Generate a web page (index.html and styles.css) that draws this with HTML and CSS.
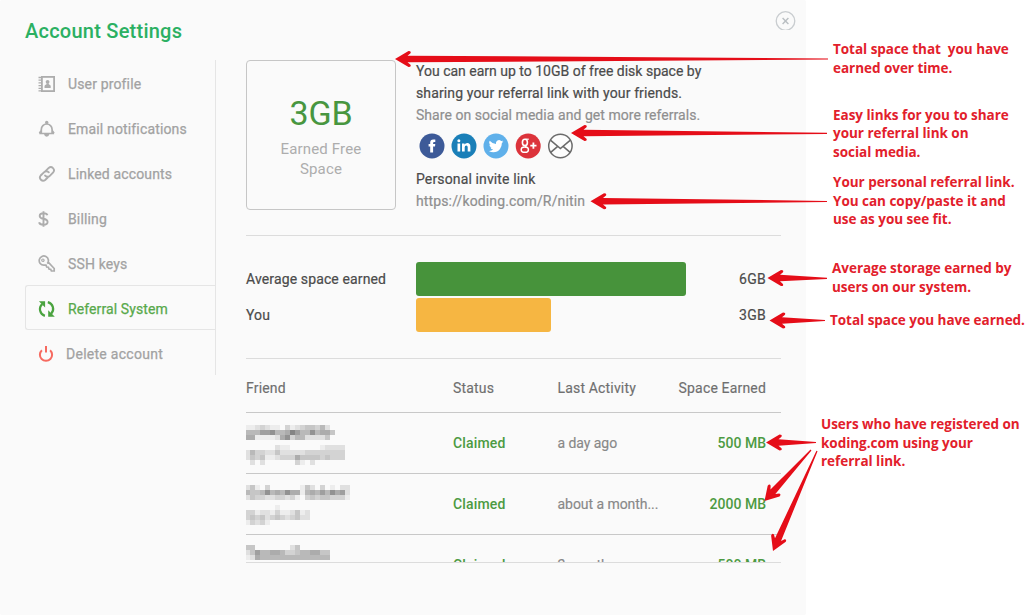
FILE: index.html
```
<!DOCTYPE html>
<html lang="en">
<head>
<meta charset="utf-8">
<title>Account Settings</title>
<link rel="stylesheet" href="styles.css">
</head>
<body>
<div class="page">
  <section class="modal">
    <header class="modal-head">
      <h1>Account Settings</h1>
      <svg class="close" width="21" height="19" viewBox="0 0 21 19"><circle cx="10.5" cy="10" r="9.3" fill="none" stroke="#c9cdd0" stroke-width="1.3"/><path d="M7.6 7.1l5.8 5.8M13.4 7.1l-5.8 5.8" stroke="#b9bec2" stroke-width="1.4"/></svg>
    </header>
    <div class="modal-body">
      <nav class="side">
        <a><svg width="18" height="18" viewBox="0 0 18 18"><rect x="3.9" y="1.9" width="12.2" height="14.2" fill="none" stroke="#adadad" stroke-width="1.8"/><path d="M0.5 2.5h3M0.5 5.2h3M0.5 7.9h3M0.5 10.6h3M0.5 13.3h3M0.5 15.9h3" stroke="#adadad" stroke-width="1.3"/><circle cx="9.6" cy="6.8" r="1.9" fill="#adadad"/><path d="M6.5 13v-2q.3-1.3 1.8-1.4l.4-1.4h1.900l.4 1.400q1.500.1 1.700 1.400v2z" fill="#adadad"/></svg><span>User profile</span></a>
        <a><svg width="18" height="18" viewBox="0 0 18 18"><path d="M1.300 13.500h14.800M3.300 13v-3.600a5.400 5.400 0 0 1 10.800 0V13M3.300 10.500L1.400 13.300M14.100 10.500l1.900 2.800" fill="none" stroke="#adadad" stroke-width="1.700"/><circle cx="8.700" cy="2.500" r="1.700" fill="#adadad"/><path d="M6 14h5.400q-.6 2.800-2.700 2.800T6 14z" fill="#adadad"/></svg><span>Email notifications</span></a>
        <a><svg width="18" height="18" viewBox="0 0 18 18"><g fill="none" stroke="#adadad" stroke-width="1.900" stroke-linecap="round"><path d="M8 5.600l2.700-2.700a3.200 3.200 0 0 1 4.500 4.500l-3.400 3.400a3.200 3.200 0 0 1-4.700-.2"/><path d="M9.700 12.500L7.200 15a3.200 3.200 0 0 1-4.500-4.500l3.500-3.400a3.200 3.200 0 0 1 4.600.2"/></g></svg><span>Linked accounts</span></a>
        <a><svg width="18" height="18" viewBox="0 0 18 18"><path d="M9.400 5.200Q8.800 3.300 5.600 3.300 1.700 3.400 1.700 6q0 2.100 3.600 2.800 4.300.8 4.300 3.200 0 2.700-4.200 2.700-3.800 0-4.300-2.500M5.500 1.200v15.500" fill="none" stroke="#adadad" stroke-width="1.900"/></svg><span>Billing</span></a>
        <a><svg width="18" height="18" viewBox="0 0 18 18"><path d="M9.300 8.600A4.600 4.600 0 1 0 5.800 10.200L8 10.200 8.700 12 10.400 12.200 11 14 12.700 14.300 13.400 16H16.200V13.500L10.200 7.200" fill="none" stroke="#adadad" stroke-width="1.700"/><circle cx="4.900" cy="5.200" r="1.200" fill="none" stroke="#adadad" stroke-width="1.200"/></svg><span>SSH keys</span></a>
        <a class="active"><svg width="18" height="18" viewBox="0 0 18 18"><path d="M6.900 15.900A7 7 0 0 1 4.200 4.100M9.800 2.100A7 7 0 0 1 13.200 13.700" fill="none" stroke="#4aa33f" stroke-width="2.200"/><path d="M.9 1.300h6.200v6.200zM16.800 16.700h-6.600V10.300z" fill="#4aa33f"/></svg><span>Referral System</span></a>
        <a class="delete"><svg width="18" height="18" viewBox="0 0 18 18"><path d="M3.900 5.200a6.100 6.100 0 1 0 8.200 0M8 1v6.500" fill="none" stroke="#f66a60" stroke-width="2"/></svg><span>Delete account</span></a>
      </nav>
      <main class="main">
        <div class="top">
          <div class="earned"><strong>3GB</strong><span>Earned Free<br>Space</span></div>
          <div class="share">
            <p class="l1">You can earn up to 10GB of free disk space by</p>
            <p>sharing your referral link with your friends.</p>
            <p class="muted l3">Share on social media and get more referrals.</p>
            <div class="social">
              <svg viewBox="0 0 26 26"><circle cx="13" cy="13" r="12.500" fill="#3d5a98"/><path d="M11.200 19.400v-5.800H9.600v-2.500h1.600V9.500q0-3.100 3.100-3.100h2V9h-1.200q-1 0-1 .9v1.200h2.200l-.3 2.500h-1.900v5.800z" fill="#fff"/></svg>
              <svg viewBox="0 0 26 26"><circle cx="13" cy="13" r="12.500" fill="#1a7fb8"/><path d="M6.500 10.400h2.700v8H6.500zM11 10.400h2.500v1.200q.9-1.500 2.800-1.500 3.100 0 3.100 3.600v4.700h-2.700v-4.200q0-1.800-1.400-1.800-1.600 0-1.600 1.900v4.100H11z" fill="#fff"/><circle cx="7.850" cy="7.800" r="1.500" fill="#fff"/></svg>
              <svg viewBox="0 0 26 26"><circle cx="13" cy="13" r="12.500" fill="#5fb0ea"/><path d="M20.400 8.600q-.8.400-1.700.5.900-.6 1.300-1.700-.9.500-1.900.7A3 3 0 0 0 13 10.900Q9.300 10.700 6.700 7.700q-1.400 2.500.9 4.100-.7 0-1.300-.4.100 2.400 2.400 3-.7.200-1.300.1.600 1.900 2.800 2.100-1.900 1.500-4.400 1.300 2.200 1.300 4.600 1.300 4.200 0 6.600-3.200 1.900-2.600 1.900-5.900.9-.6 1.500-1.500z" fill="#fff"/></svg>
              <svg viewBox="0 0 26 26"><circle cx="13.200" cy="13" r="12.500" fill="#dc333b"/><g fill="none" stroke="#fff"><ellipse cx="9.900" cy="9.400" rx="2.500" ry="3.100" stroke-width="1.600"/><path d="M10.500 6.200h3.300" stroke-width="1.200"/><path d="M11 12.300q-1.200 1 .4 2" stroke-width="1.500"/><ellipse cx="9.800" cy="16.700" rx="3.600" ry="2.600" stroke-width="1.500"/><path d="M15.300 12.700h6.200M18.400 9.600v6.200" stroke-width="1.800"/></g></svg>
              <svg viewBox="0 0 26 26"><circle cx="13.400" cy="13" r="11.700" fill="#fdfdfd" stroke="#6b6b6b" stroke-width="1.500"/><path d="M3.700 7.300l9.700 8.200 9.700-8.200M3.700 19.300l7-6M23.100 19.300l-7-6" fill="none" stroke="#6b6b6b" stroke-width="1.600"/></svg>
            </div>
            <p>Personal invite link</p>
            <p class="muted">https://koding.com/R/nitin</p>
          </div>
        </div>
        <div class="bars">
          <div class="bar-row"><span class="bar-label">Average space earned</span><span class="track"><i class="bar green" style="width:270px"></i></span><span class="amount">6GB</span></div>
          <div class="bar-row"><span class="bar-label">You</span><span class="track"><i class="bar amber" style="width:135px"></i></span><span class="amount">3GB</span></div>
        </div>
        <div class="row thead"><span>Friend</span><span>Status</span><span>Last Activity</span><span class="right">Space Earned</span></div>
        <div class="tbody">
          <div class="row"><svg class="mosaic r1" width="110" height="40"></svg><b>Claimed</b><span class="when">a day ago</span><b class="right">500 MB</b></div>
          <div class="row"><svg class="mosaic r2" width="110" height="40"></svg><b>Claimed</b><span class="when">about a month...</span><b class="right">2000 MB</b></div>
          <div class="row"><svg class="mosaic r3" width="110" height="40"></svg><b>Claimed</b><span class="when">2 months ago</span><b class="right">500 MB</b></div>
        </div>
      </main>
    </div>
  </section>
  <aside class="notes">
    <p class="n1">Total space that  you have
earned over time.</p>
    <p class="n2">Easy links for you to share
your referral link on
social media.</p>
    <p class="n3">Your personal referral link.
You can copy/paste it and
use as you see fit.</p>
    <p class="n4">Average storage earned by
users on our system.</p>
    <p class="n5">Total space you have earned.</p>
    <p class="n6">Users who have registered on
koding.com using your
referral link.</p>
  </aside>
  <svg class="arrows" width="1030" height="615"></svg>
</div>
<script src="draw.js"></script>
</body>
</html>
```
FILE: styles.css
```
* { box-sizing: border-box; }
body { margin: 0; background: #fff; font-family: Roboto, "Liberation Sans", sans-serif; font-size: 14px; letter-spacing: .13px; color: #4b4b4b; }
h1, p { margin: 0; }
.page { position: relative; display: flex; width: 1030px; height: 615px; overflow: hidden; }
.modal { width: 806px; height: 615px; background: #fafafa; border-radius: 2px; }
.modal-head { display: flex; justify-content: space-between; height: 60px; padding: 11px 10px 0 25px; }
h1 { font-size: 20px; line-height: 40px; font-weight: 500; color: #2bb062; letter-spacing: .24px; }
.close { display: block; }
.modal-body { display: flex; padding-left: 25px; }

.side { width: 191px; height: 315px; border-right: 1px solid #e5e5e5; }
.side a { display: flex; align-items: center; height: 45px; padding: 2px 0 0 13px; color: #a2a2a2; -webkit-text-stroke: .25px; letter-spacing: .15px; }
.side svg { margin-right: 12px; }
.side a.active { border: 1px solid #e5e5e5; border-right: 0; border-radius: 3px 0 0 3px; padding-left: 12px; color: #58a94b; letter-spacing: .1px; }
.side .delete svg { margin-right: 10px; }
.side .delete { letter-spacing: .27px; }

.main { width: 535px; margin-left: 30px; }
.top { display: flex; height: 176px; border-bottom: 1px solid #dcdcdc; }
.earned { width: 150px; height: 150px; border: 1px solid #c6c6c6; border-radius: 4px; display: flex; flex-direction: column; align-items: center; text-align: center; padding-top: 32px; }
.earned strong { font-size: 34px; line-height: 40px; font-weight: 400; color: #48963f; letter-spacing: -.1px; }
.earned span { margin-top: 6px; font-size: 15px; line-height: 20px; color: #adadad; letter-spacing: .15px; }
.share { margin-left: 20px; line-height: 22px; -webkit-text-stroke: .2px; }
.share .l1 { letter-spacing: 0; }
.share .l3 { letter-spacing: .05px; }
.muted { color: #8f8f8f; }
.social { display: flex; gap: 6.200px; height: 26px; margin: 7px 0 9px 2.500px; }
.social svg { width: 26px; height: 26px; }

.bars { height: 123px; padding-top: 26px; border-bottom: 1px solid #dcdcdc; display: flex; flex-direction: column; gap: 2px; -webkit-text-stroke: .2px; }
.bar-row { display: flex; align-items: center; height: 34px; padding-right: 15px; }
.bar-label { width: 170px; }
.track { flex: 1; }
.bar { display: block; height: 34px; border-radius: 3px; }
.green { background: #47933b; }
.amber { background: #f6b642; }
.amount { letter-spacing: .25px; }

.row { display: grid; grid-template-columns: 207px 104.500px 80px 1fr; align-items: center; height: 61px; padding-right: 15px; border-bottom: 1px solid #c8c8c8; white-space: nowrap; }
.thead { height: 54px; padding-bottom: 0; padding-top: 4px; color: #6f6f6f; letter-spacing: .17px; -webkit-text-stroke: .15px; }
.right { text-align: right; }
.row b { font-weight: 500; color: #4c9a42; letter-spacing: .15px; }
.row b.right { letter-spacing: 0; }
.when { color: #888; letter-spacing: -.05px; -webkit-text-stroke: .15px; }
.tbody { height: 150px; overflow: hidden; border-bottom: 1px solid #dcdcdc; }
.mosaic { display: block; align-self: start; margin-left: -1px; shape-rendering: crispEdges; }
.r1 { margin-top: 12px; }
.r2 { margin-top: 11px; }
.r3 { margin-top: 10px; }

.notes { flex: 1; padding: 40px 0 0 15px; font: 700 13.500px/18.500px "Open Sans", "Noto Sans", sans-serif; color: #e2202b; letter-spacing: -.03px; }
.notes p { white-space: pre; }
.n1, .n2, .n3 { padding-left: 12px; }
.n2 { margin-top: 28.500px; }
.n3 { margin-top: 12px; }
.n4 { margin-top: 30.500px; padding-left: 11px; }
.n5 { margin-top: 14.500px; padding-left: 9px; }
.n6 { margin-top: 86px; }
.arrows { position: absolute; left: 0; top: 0; pointer-events: none; }
```
FILE: draw.js
```
const NS = "http://www.w3.org/2000/svg";
function add(parent, tag, attrs) {
  const el = document.createElementNS(NS, tag);
  for (const k in attrs) el.setAttribute(k, attrs[k]);
  parent.appendChild(el);
}

// Pixelated names: one digit per 5px cell, higher is darker.
const names = {
  r1: ["112321103123443520", "555778556975585664", "661111268355222240", "", "00000021100000012222", "25332242222233333333", "24341123336444434333", "0202000000310200"],
  r2: ["241030000001420301022", "544585658661565758672", "243322332310343443331", "", "0000001", "3312213112412", "3434234323422", "13231"],
  r3: ["44000000024000000", "24755665334556644", "12655555555555555"]
};
for (const id in names) {
  const svg = document.querySelector("." + id);
  names[id].forEach((line, y) => [...line].forEach((d, x) => {
    const v = 250 - d * 13;
    if (+d) add(svg, "rect", { x: x * 5, y: y * 5, width: 5, height: 5, fill: `rgb(${v},${v},${v})` });
  }));
}

// Tapered callout arrows: tip x, tip y, tail x, tail y.
const arrows = [[395, 59, 828, 59], [571, 133, 827, 133.3], [590.5, 201.3, 827, 201.5], [767.5, 278, 827, 278.3], [769.5, 320.5, 825, 320.5], [766, 442.5, 816, 442.5], [764.5, 501, 811, 450], [773, 551, 817, 451]];
const layer = document.querySelector(".arrows");
for (const [x, y, tx, ty] of arrows) {
  const len = Math.hypot(tx - x, ty - y), a = Math.atan2(ty - y, tx - x) * 180 / Math.PI;
  add(layer, "path", {
    d: `M0 0L13.500 -8Q16.500 -8 15.500 -5.800L12.500 -3.300L${len} -.6V.6L12.500 3.300L15.500 5.800Q16.500 8 13.500 8Z`,
    fill: "#e50d18", transform: `translate(${x} ${y}) rotate(${a})`
  });
}
```
